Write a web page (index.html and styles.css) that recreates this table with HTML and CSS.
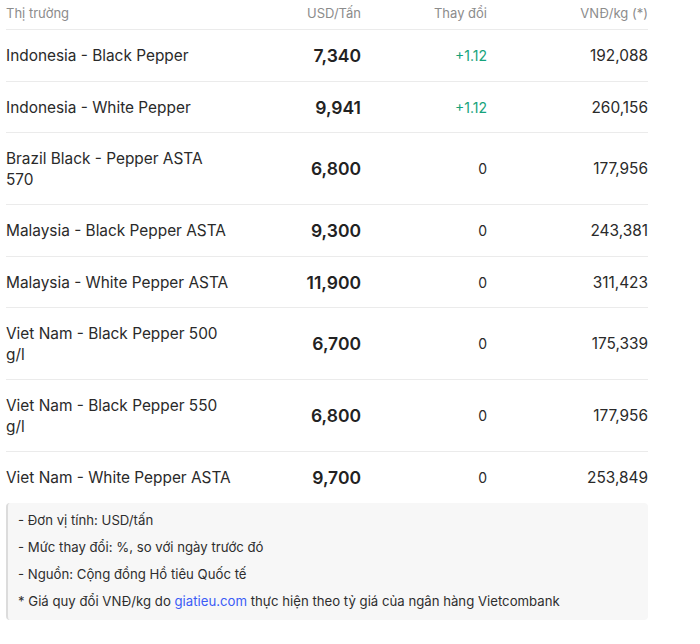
FILE: index.html
```html
<!DOCTYPE html>
<html lang="vi">
<head>
<meta charset="utf-8">
<title>Giá tiêu thế giới</title>
<link rel="stylesheet" href="styles.css">
</head>
<body>
<div class="wrap">
  <table class="price-table">
    <colgroup>
      <col class="c-name">
      <col class="c-usd">
      <col class="c-chg">
      <col class="c-vnd">
    </colgroup>
    <thead>
      <tr>
        <th class="left">Thị trường</th>
        <th>USD/Tấn</th>
        <th>Thay đổi</th>
        <th>VNĐ/kg (*)</th>
      </tr>
    </thead>
    <tbody>
      <tr><td class="name">Indonesia - Black Pepper</td><td class="usd">7,340</td><td class="chg up">+1.12</td><td class="vnd">192,088</td></tr>
      <tr><td class="name">Indonesia - White Pepper</td><td class="usd">9,941</td><td class="chg up">+1.12</td><td class="vnd">260,156</td></tr>
      <tr><td class="name">Brazil Black - Pepper ASTA 570</td><td class="usd">6,800</td><td class="chg">0</td><td class="vnd">177,956</td></tr>
      <tr><td class="name">Malaysia - Black Pepper ASTA</td><td class="usd">9,300</td><td class="chg">0</td><td class="vnd">243,381</td></tr>
      <tr><td class="name">Malaysia - White Pepper ASTA</td><td class="usd">11,900</td><td class="chg">0</td><td class="vnd">311,423</td></tr>
      <tr><td class="name">Viet Nam - Black Pepper 500 g/l</td><td class="usd">6,700</td><td class="chg">0</td><td class="vnd">175,339</td></tr>
      <tr><td class="name">Viet Nam - Black Pepper 550 g/l</td><td class="usd">6,800</td><td class="chg">0</td><td class="vnd">177,956</td></tr>
      <tr><td class="name">Viet Nam - White Pepper ASTA</td><td class="usd">9,700</td><td class="chg">0</td><td class="vnd">253,849</td></tr>
    </tbody>
  </table>
  <div class="note">
    <p>- Đơn vị tính: USD/tấn</p>
    <p>- Mức thay đổi: %, so với ngày trước đó</p>
    <p>- Nguồn: Cộng đồng Hồ tiêu Quốc tế</p>
    <p>* Giá quy đổi VNĐ/kg do <a href="#">giatieu.com</a> thực hiện theo tỷ giá của ngân hàng Vietcombank</p>
  </div>
</div>
</body>
</html>
```
FILE: styles.css
```css
html, body {
  margin: 0;
  padding: 0;
  background: #ffffff;
}
body {
  font-family: Inter, "Noto Sans", sans-serif;
  color: #262626;
}
.wrap {
  width: 642px;
  padding-left: 6px;
}
.price-table {
  width: 642px;
  border-collapse: collapse;
  table-layout: fixed;
}
.c-name { width: 231px; }
.c-usd { width: 124px; }
.c-chg { width: 126px; }
.c-vnd { width: 161px; }
.price-table th {
  font-size: 13px;
  font-weight: 400;
  color: #8c8c8c;
  text-align: right;
  padding: 4px 0 7px;
  line-height: 18px;
  border-bottom: 1px solid #ebebeb;
}
.price-table th.left { text-align: left; }
.price-table td {
  padding: 16px 0 14px;
  line-height: 20.5px;
  vertical-align: middle;
  border-bottom: 1px solid #ebebeb;
}
.price-table td.name { padding-right: 6px; }
.price-table tbody tr:last-child td { border-bottom: none; }
.name {
  font-size: 15.4px;
  color: #2a2a2a;
  text-align: left;
}
.usd {
  font-size: 17.5px;
  font-weight: 600;
  color: #222;
  text-align: right;
}
.chg {
  font-size: 14px;
  color: #2a2a2a;
  text-align: right;
}
.chg.up { color: #16a37b; }
.vnd {
  font-size: 15.4px;
  color: #2a2a2a;
  text-align: right;
}
.note {
  background: #f7f7f7;
  border-left: 2px solid #dcdcdc;
  border-radius: 4px;
  padding: 4px 10px 5px;
}
.note p {
  margin: 0;
  font-size: 13.2px;
  line-height: 27px;
  color: #2e2e2e;
}
.note a {
  color: #3b5cf6;
  text-decoration: none;
}
```
